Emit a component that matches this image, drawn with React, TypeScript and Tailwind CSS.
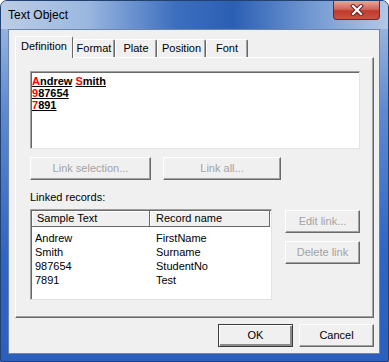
import React from "react";

const ui = "font-['Liberation_Sans',Arial,sans-serif] text-[11px] leading-[13px] text-black";

function Btn({
  label,
  w,
  disabled,
  isDefault,
}: {
  label: string;
  w: string;
  disabled?: boolean;
  isDefault?: boolean;
}) {
  return (
    <div
      className={`flex h-[23px] ${w} shrink-0 items-center justify-center border bg-[#f0f0f0] ${
        isDefault
          ? "border-[#3c3c3c] shadow-[inset_1px_1px_0_#fff,inset_-2px_-2px_0_#8a8a8a]"
          : "border-t-white border-l-white border-r-[#696969] border-b-[#696969] shadow-[inset_-1px_-1px_0_#a0a0a0]"
      } ${disabled ? "text-[#a3a3a3]" : "text-black"}`}
    >
      {label}
    </div>
  );
}

function Tab({ label, w, active }: { label: string; w: string; active?: boolean }) {
  if (active) {
    return (
      <div
        className={`relative z-10 -mb-px flex h-[22px] ${w} shrink-0 items-start justify-center rounded-tr-[2px] border-t border-l border-r border-t-white border-l-white border-r-[#696969] bg-[#f0f0f0] pt-[3px]`}
      >
        {label}
      </div>
    );
  }
  return (
    <div
      className={`flex h-[18px] ${w} shrink-0 items-start justify-center rounded-tr-[2px] border-t border-l border-r border-t-white border-l-white border-r-[#696969] bg-[#f0f0f0] pt-[2px] shadow-[inset_-1px_0_0_#a0a0a0]`}
    >
      {label}
    </div>
  );
}

function Word({ first, rest }: { first: string; rest: string }) {
  return (
    <span className="underline decoration-black underline-offset-[1px]">
      <span className="text-[#ff0000]">{first}</span>
      {rest}
    </span>
  );
}

const rows = [
  ["Andrew", "FirstName"],
  ["Smith", "Surname"],
  ["987654", "StudentNo"],
  ["7891", "Test"],
];

export default function App() {
  return (
    <div className={`h-[362px] w-[389px] bg-white ${ui}`}>
      <div className="flex h-[362px] w-[389px] flex-col rounded-t-[7px] border border-[#23416f] bg-[linear-gradient(180deg,#a9c0e0_0%,#5f8ad0_30%,#2e66c4_70%,#2a5fbd_100%)] pb-[7px]">
        {/* title bar */}
        <div className="flex h-[28px] shrink-0 items-start justify-between rounded-t-[6px] bg-[linear-gradient(90deg,#bccde5_0%,#9bb8e0_22%,#3d6fbf_45%,#2b5fb4_60%,#7198d2_80%,#b4c8e5_100%)] pl-[7px] pr-[8px]">
          <span className="mt-[7px] text-[12px] leading-[15px] text-black">Text Object</span>
          <div className="flex h-[19px] w-[47px] items-center justify-center rounded-b-[4px] border border-t-0 border-[#6e2a24] bg-[linear-gradient(180deg,#e5a79c_0%,#d0675a_45%,#c0392b_55%,#c95446_100%)]">
            <svg width="14" height="12" viewBox="0 0 14 12">
              <path d="M3 2 L11 10 M11 2 L3 10" stroke="#5a1e18" strokeWidth="4" strokeLinecap="square" />
              <path d="M3 2 L11 10 M11 2 L3 10" stroke="#fff" strokeWidth="2.2" strokeLinecap="square" />
            </svg>
          </div>
        </div>

        {/* client area */}
        <div className="mx-[7px] mr-[8px] flex flex-1 flex-col border border-[#6d85ab] bg-[#f0f0f0] pl-[6px] pr-[5px] pt-[7px]">
          {/* tabs */}
          <div className="flex h-[20px] items-end">
            <Tab label="Definition" w="w-[58px]" active />
            <Tab label="Format" w="w-[42px]" />
            <Tab label="Plate" w="w-[42px]" />
            <Tab label="Position" w="w-[49px]" />
            <Tab label="Font" w="w-[42px]" />
          </div>

          {/* tab panel */}
          <div className="flex h-[261px] flex-col border border-t-white border-l-white border-r-[#696969] border-b-[#696969] pl-[14px] pt-[13px] shadow-[inset_-1px_-1px_0_#a0a0a0]">
            <div className="h-[78px] w-[330px] border border-t-[#a0a0a0] border-l-[#a0a0a0] border-r-[#e3e3e3] border-b-[#e3e3e3] bg-white pl-[1px] pt-[3px] font-bold leading-[12px] shadow-[inset_1px_1px_0_#696969]">
              <div>
                <Word first="A" rest="ndrew" /> <Word first="S" rest="mith" />
              </div>
              <div>
                <Word first="9" rest="87654" />
              </div>
              <div>
                <Word first="7" rest="891" />
              </div>
            </div>

            <div className="mt-[8px] flex gap-[12px]">
              <Btn label="Link selection..." w="w-[121px]" disabled />
              <Btn label="Link all..." w="w-[118px]" disabled />
            </div>

            <div className="mt-[11px] h-[13px]">Linked records:</div>

            <div className="mt-[5px] flex items-start gap-[13px]">
              <div className="h-[91px] w-[242px] border border-t-[#a0a0a0] border-l-[#a0a0a0] border-r-[#e3e3e3] border-b-[#e3e3e3] bg-white shadow-[inset_1px_1px_0_#696969]">
                <div className="ml-px mt-px flex h-[16px]">
                  <div className="flex w-[118px] items-center border-r border-b border-r-[#696969] border-b-[#696969] bg-[#f0f0f0] pl-[5px] shadow-[inset_1px_1px_0_#fff]">
                    Sample Text
                  </div>
                  <div className="flex w-[120px] items-center border-r border-b border-r-[#696969] border-b-[#696969] bg-[#f0f0f0] pl-[6px] shadow-[inset_1px_1px_0_#fff]">
                    Record name
                  </div>
                </div>
                <div className="pt-[4px]">
                  {rows.map(([a, b]) => (
                    <div key={a} className="flex h-[14px] items-center">
                      <div className="w-[119px] pl-[4px]">{a}</div>
                      <div className="pl-[6px]">{b}</div>
                    </div>
                  ))}
                </div>
              </div>

              <div className="mt-px flex flex-col gap-[8px]">
                <Btn label="Edit link..." w="w-[75px]" disabled />
                <Btn label="Delete link" w="w-[75px]" disabled />
              </div>
            </div>
          </div>

          {/* dialog buttons */}
          <div className="mt-[6px] flex justify-end gap-[6px]">
            <Btn label="OK" w="w-[75px]" isDefault />
            <Btn label="Cancel" w="w-[75px]" />
          </div>
        </div>
      </div>
    </div>
  );
}
